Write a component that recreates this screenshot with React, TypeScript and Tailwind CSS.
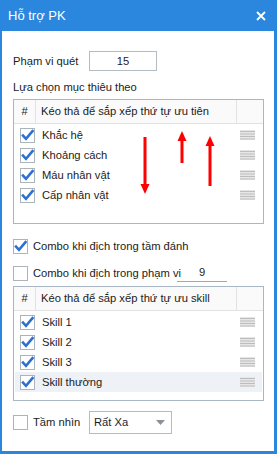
import React from 'react'

const FONT = { fontFamily: '"Liberation Sans", Arial, sans-serif' }

function Check({ checked }: { checked: boolean }) {
  return (
    <svg width="15" height="15" viewBox="0 0 15 15" className="shrink-0">
      <rect x="0.5" y="0.5" width="14" height="14" fill="#fff" stroke="#abb3bb" />
      {checked && (
        <path d="M3 7.5 L6 10.8 L12.5 3.2" fill="none" stroke="#2e6fd0" strokeWidth="2.6" strokeLinecap="square" />
      )}
    </svg>
  )
}

function Grip() {
  return (
    <svg width="15" height="10" viewBox="0 0 15 10">
      <rect x="0" y="0" width="15" height="10" fill="#e6e6e6" />
      {[1, 3.5, 6, 8.5].map(y => (
        <rect key={y} x="0" y={y} width="15" height="1" fill="#bdbdbd" />
      ))}
    </svg>
  )
}

function UpArrow({ h }: { h: number }) {
  return (
    <svg width="10" height={h} viewBox={`0 0 10 ${h}`}>
      <polygon points="5,0 9.5,10 0.5,10" fill="#ff0000" />
      <rect x="3.5" y="9" width="3" height={h - 9} fill="#ff0000" />
    </svg>
  )
}

function DownArrow({ h }: { h: number }) {
  return (
    <svg width="10" height={h} viewBox={`0 0 10 ${h}`}>
      <rect x="3.5" y="0" width="3" height={h - 9} fill="#ff0000" />
      <polygon points={`0.5,${h - 10} 9.5,${h - 10} 5,${h}`} fill="#ff0000" />
    </svg>
  )
}

function SortTable({ title, items, selected, h, arrows }: {
  title: string
  items: string[]
  selected?: number
  h: string
  arrows?: boolean
}) {
  return (
    <div className={`relative border border-[#a9b6c3] box-border ${h}`}>
      <div className="flex h-[24px] bg-[#fafafa] border-b border-[#e2e2e2]">
        <div className="w-[22px] flex items-center justify-center border-r border-[#e2e2e2]">#</div>
        <div className="w-[201px] flex items-center pl-[5px] border-r border-[#e2e2e2] whitespace-nowrap">{title}</div>
        <div className="flex-1" />
      </div>
      <div className="pt-[1px] px-[1px]">
        {items.map((it, i) => (
          <div key={it} className={`flex items-center h-[20px] ${selected === i ? 'bg-[#eef1f6]' : ''}`}>
            <div className="w-[21px] flex justify-end pr-[1px]">
              <Check checked />
            </div>
            <div className="flex-1 pl-[6px] whitespace-nowrap">{it}</div>
            <div className="w-[22px] flex items-center">
              <Grip />
            </div>
          </div>
        ))}
      </div>
      {arrows && (
        <>
          <div className="absolute left-[126px] top-[37px]"><DownArrow h={57} /></div>
          <div className="absolute left-[163px] top-[31px]"><UpArrow h={32} /></div>
          <div className="absolute left-[191px] top-[36px]"><UpArrow h={50} /></div>
        </>
      )}
    </div>
  )
}

export default function App() {
  return (
    <div className="w-[277px] h-[454px] bg-[#2b87dd] flex flex-col text-[11.2px] text-[#1c1c1c]" style={FONT}>
      {/* Title bar */}
      <div className="h-[31px] flex items-center justify-between pl-[8px] pr-[11px] text-white">
        <span className="text-[13px]">Hỗ trợ PK</span>
        <svg width="10" height="10" viewBox="0 0 10 10">
          <path d="M1 1 L9 9 M9 1 L1 9" stroke="#fff" strokeWidth="1.8" />
        </svg>
      </div>

      {/* Body */}
      <div className="flex-1 bg-white ml-[2px] mr-[3px] mb-[3px] pl-[11px] pr-[10px] pt-[20px]">
        <div className="flex items-center h-[20px]">
          <span className="w-[76px]">Phạm vi quét</span>
          <div className="w-[68px] h-[20px] border border-[#b3bbc3] flex items-center justify-center">15</div>
        </div>

        <div className="flex items-center h-[20px] mt-[6px]">Lựa chọn mục thiêu theo</div>

        <div className="mt-[2px]">
          <SortTable
            title="Kéo thả để sắp xếp thứ tự ưu tiên"
            items={['Khắc hệ', 'Khoảng cách', 'Máu nhân vật', 'Cấp nhân vật']}
            h="h-[125px]"
            arrows
          />
        </div>

        <div className="flex items-center h-[20px] mt-[12px] gap-[5px]">
          <Check checked />
          <span>Combo khi địch trong tầm đánh</span>
        </div>

        <div className="flex items-center h-[20px] mt-[7px]">
          <Check checked={false} />
          <span className="ml-[5px] w-[144px] whitespace-nowrap">Combo khi địch trong phạm vi</span>
          <div className="w-[50px] h-[18px] border-b border-[#a6a6a6] flex items-center justify-center">9</div>
        </div>

        <div className="mt-[3px]">
          <SortTable
            title="Kéo thả để sắp xếp thứ tự ưu skill"
            items={['Skill 1', 'Skill 2', 'Skill 3', 'Skill thường']}
            selected={3}
            h="h-[115px]"
          />
        </div>

        <div className="flex items-center h-[23px] mt-[10px]">
          <Check checked={false} />
          <span className="ml-[5px] w-[56px]">Tầm nhìn</span>
          <div className="w-[83px] h-[23px] border border-[#b3bbc3] flex items-center justify-between pl-[4px] pr-[6px]">
            <span>Rất Xa</span>
            <svg width="9" height="5" viewBox="0 0 9 5">
              <polygon points="0,0 9,0 4.5,5" fill="#8a9099" />
            </svg>
          </div>
        </div>
      </div>
    </div>
  )
}
